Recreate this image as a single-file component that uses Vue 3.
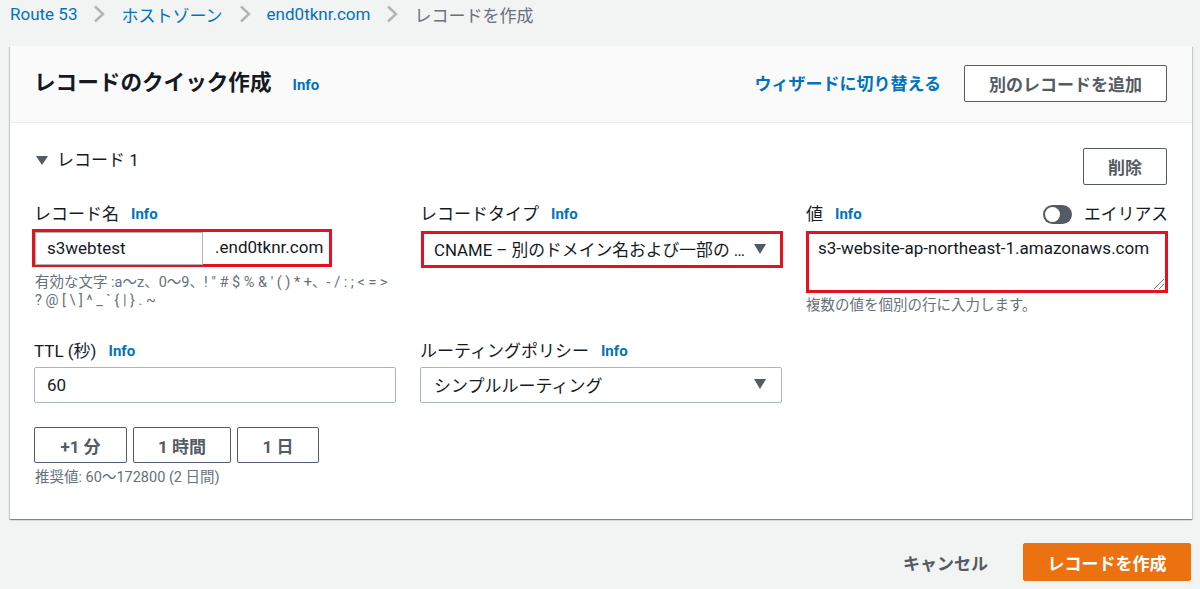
<script setup>
const crumbs = ['Route 53', 'ホストゾーン', 'end0tknr.com']
const quickButtons = [
  { label: '+1 分', cls: 'q1' },
  { label: '1 時間', cls: 'q2' },
  { label: '1 日', cls: 'q3' },
]
</script>

<template>
  <div class="page">
    <nav class="crumbs">
      <template v-for="c in crumbs" :key="c">
        <a class="crumb">{{ c }}</a>
        <svg class="sep" width="12" height="18" viewBox="0 0 12 18">
          <path d="M2 1.5 L10 9 L2 16.5" fill="none" stroke="#aab7b8" stroke-width="2.4" />
        </svg>
      </template>
      <span class="crumb-current">レコードを作成</span>
    </nav>

    <section class="card">
      <header class="card-head">
        <h1>レコードのクイック作成</h1>
        <a class="info head-info">Info</a>
        <a class="wizard">ウィザードに切り替える</a>
        <button class="btn add-btn">別のレコードを追加</button>
      </header>

      <div class="card-body">
        <div class="record-row">
          <div class="record-title">
            <span class="tri small"></span>
            <span>レコード 1</span>
          </div>
          <button class="btn del-btn">削除</button>
        </div>

        <div class="grid">
          <div class="field">
            <div class="label">レコード名<a class="info">Info</a></div>
            <div class="name-box">
              <div class="name-input">s3webtest</div>
              <div class="name-suffix">.end0tknr.com</div>
            </div>
            <p class="hint name-hint">有効な文字 :a〜z、0〜9、! " # $ % &amp; ' ( ) * +、- / : ; &lt; = &gt;<br>? @ [ \ ] ^ _ ` { | } . ~</p>
          </div>

          <div class="field">
            <div class="label">レコードタイプ<a class="info">Info</a></div>
            <div class="select marked-select">
              <span class="select-text">CNAME – 別のドメイン名および一部の …</span>
              <span class="tri"></span>
            </div>
          </div>

          <div class="field">
            <div class="label value-label">
              <span class="value-title">値<a class="info">Info</a></span>
              <span class="alias">
                <span class="toggle"><span class="knob"></span></span>
                エイリアス
              </span>
            </div>
            <div class="textarea">
              s3-website-ap-northeast-1.amazonaws.com
              <svg class="grip" width="12" height="12" viewBox="0 0 12 12">
                <path d="M1 11 L11 1 M6 11 L11 6" stroke="#777" stroke-width="1" fill="none" />
              </svg>
            </div>
            <p class="hint value-hint">複数の値を個別の行に入力します。</p>
          </div>

          <div class="field ttl">
            <div class="label">TTL (秒)<a class="info">Info</a></div>
            <div class="input">60</div>
            <div class="quick">
              <button v-for="b in quickButtons" :key="b.label" class="btn quick-btn" :class="b.cls">{{ b.label }}</button>
            </div>
            <p class="hint tight">推奨値: 60〜172800 (2 日間)</p>
          </div>

          <div class="field ttl">
            <div class="label">ルーティングポリシー<a class="info">Info</a></div>
            <div class="select">
              <span class="select-text">シンプルルーティング</span>
              <span class="tri"></span>
            </div>
          </div>
        </div>
      </div>
    </section>

    <footer class="foot">
      <a class="cancel">キャンセル</a>
      <button class="primary">レコードを作成</button>
    </footer>
  </div>
</template>

<style>
html, body { margin: 0; background: #f2f3f3; }
</style>

<style scoped>
.page {
  width: 1200px;
  height: 589px;
  overflow: hidden;
  background: #f2f3f3;
  font-family: Roboto, "Noto Sans CJK JP", sans-serif;
  font-size: 17px;
  color: #16191f;
}
.crumbs {
  height: 46px;
  padding: 0 0 18px 10px;
  box-sizing: border-box;
  display: flex;
  align-items: center;
}
.crumb { color: #0073bb; }
.crumb-current { color: #687078; }
.sep { margin: 0 16px; }
.card {
  margin: 0 8px 0 10px;
  background: #fff;
  height: 473px;
  box-shadow: 0 1px 1px 0 rgba(0, 28, 36, 0.3), 1px 1px 1px 0 rgba(0, 28, 36, 0.15), -1px 1px 1px 0 rgba(0, 28, 36, 0.15);
}
.card-head {
  height: 77px;
  box-sizing: border-box;
  padding: 0 24px;
  background: #fafafa;
  border-bottom: 1px solid #eaeded;
  display: flex;
  align-items: center;
}
h1 {
  margin: -3px 0 0;
  font-size: 21.6px;
  font-weight: 700;
  line-height: 28px;
}
.info {
  color: #0073bb;
  font-size: 15px;
  font-weight: 700;
  margin-left: 12px;
}
.head-info { margin-left: 21px; margin-top: 2px; }
.wizard {
  margin-left: auto;
  margin-right: 23px;
  color: #0073bb;
  font-weight: 700;
  margin-top: -3px;
}
.btn {
  background: #fff;
  border: 1px solid #545b64;
  border-radius: 2px;
  color: #545b64;
  font: inherit;
  font-weight: 700;
  padding: 0;
  box-sizing: border-box;
}
.add-btn { width: 203px; height: 37px; margin-right: 1px; margin-top: -1px; }
.card-body { padding: 25px 24px 0; }
.record-row {
  display: flex;
  justify-content: space-between;
  align-items: flex-start;
  height: 55px;
}
.record-title {
  display: flex;
  align-items: center;
  gap: 9px;
  line-height: 24px;
  margin: 0 0 0 2px;
}
.del-btn { width: 84px; height: 37px; margin-right: 1px; }
.tri {
  width: 0;
  height: 0;
  border-left: 6.5px solid transparent;
  border-right: 6.5px solid transparent;
  border-top: 10px solid #545b64;
  flex: none;
}
.tri.small { border-left-width: 6px; border-right-width: 6px; border-top-width: 9px; }
.grid {
  display: grid;
  grid-template-columns: repeat(3, 362px);
  column-gap: 24px;
}
.field { min-width: 0; }
.field.ttl { margin-top: 25px; }
.field.ttl .label { margin-bottom: 5px; }
.label {
  height: 22px;
  line-height: 22px;
  margin-bottom: 6px;
  display: flex;
  align-items: center;
}
.value-label { justify-content: space-between; }
.value-title { display: flex; align-items: center; }
.alias { display: flex; align-items: center; gap: 12px; font-size: 16.8px; }
.toggle {
  width: 29px;
  height: 19px;
  border-radius: 10px;
  background: #545b64;
  display: block;
  position: relative;
}
.knob {
  position: absolute;
  left: 2px;
  top: 2px;
  width: 15px;
  height: 15px;
  border-radius: 50%;
  background: #fff;
}
/* 赤枠は参考画像の注釈 */
.name-box {
  display: flex;
  width: 300px;
  height: 38px;
  margin: -2px 0 0 -2px;
  box-sizing: border-box;
  border: 3px solid #e8101e;
}
.name-input {
  width: 168px;
  box-sizing: border-box;
  background: #fff;
  border: 1px solid #aab7b8;
  padding: 0 11px;
  line-height: 30px;
  height: 33px;
}
.name-suffix {
  flex: 1;
  padding-left: 12px;
  line-height: 30px;
  white-space: nowrap;
}
.hint {
  margin: 6px 0 0 1px;
  font-size: 14.5px;
  line-height: 18px;
  color: #687078;
  white-space: nowrap;
}
.name-hint { margin-top: 7px; }
.value-hint { margin: 4px 0 0; }
.hint.tight { margin-top: 6px; }
.select {
  height: 36px;
  box-sizing: border-box;
  border: 1px solid #aab7b8;
  border-radius: 2px;
  padding: 0 15px 2px 13px;
  display: flex;
  align-items: center;
  justify-content: space-between;
}
.marked-select {
  height: 37px;
  border: 3px solid #e8101e;
  border-radius: 0;
  margin: 0 -1px 0 1px;
  padding: 0 14px 2px 10px;
  font-size: 16.8px;
}
.select-text { white-space: nowrap; }
.textarea {
  height: 62px;
  box-sizing: border-box;
  border: 3px solid #e8101e;
  padding: 3px 9px;
  line-height: 22px;
  position: relative;
  white-space: nowrap;
}
.grip { position: absolute; right: 0; bottom: 0; }
.input {
  height: 36px;
  box-sizing: border-box;
  border: 1px solid #aab7b8;
  border-radius: 2px;
  padding: 0 12px;
  line-height: 34px;
}
.quick { display: flex; gap: 6px; margin-top: 24px; }
.quick-btn { height: 36px; }
.q1 { width: 93px; }
.q2 { width: 98px; }
.q3 { width: 82px; }
.foot {
  display: flex;
  justify-content: flex-end;
  align-items: center;
  padding: 24px 9px 0 0;
}
.cancel {
  color: #545b64;
  font-weight: 700;
  margin-right: 35px;
}
.primary {
  width: 168px;
  height: 38px;
  background: #ec7211;
  border: 1px solid #ec7211;
  border-radius: 2px;
  color: #fff;
  font: inherit;
  font-weight: 700;
  padding: 0;
}
</style>
